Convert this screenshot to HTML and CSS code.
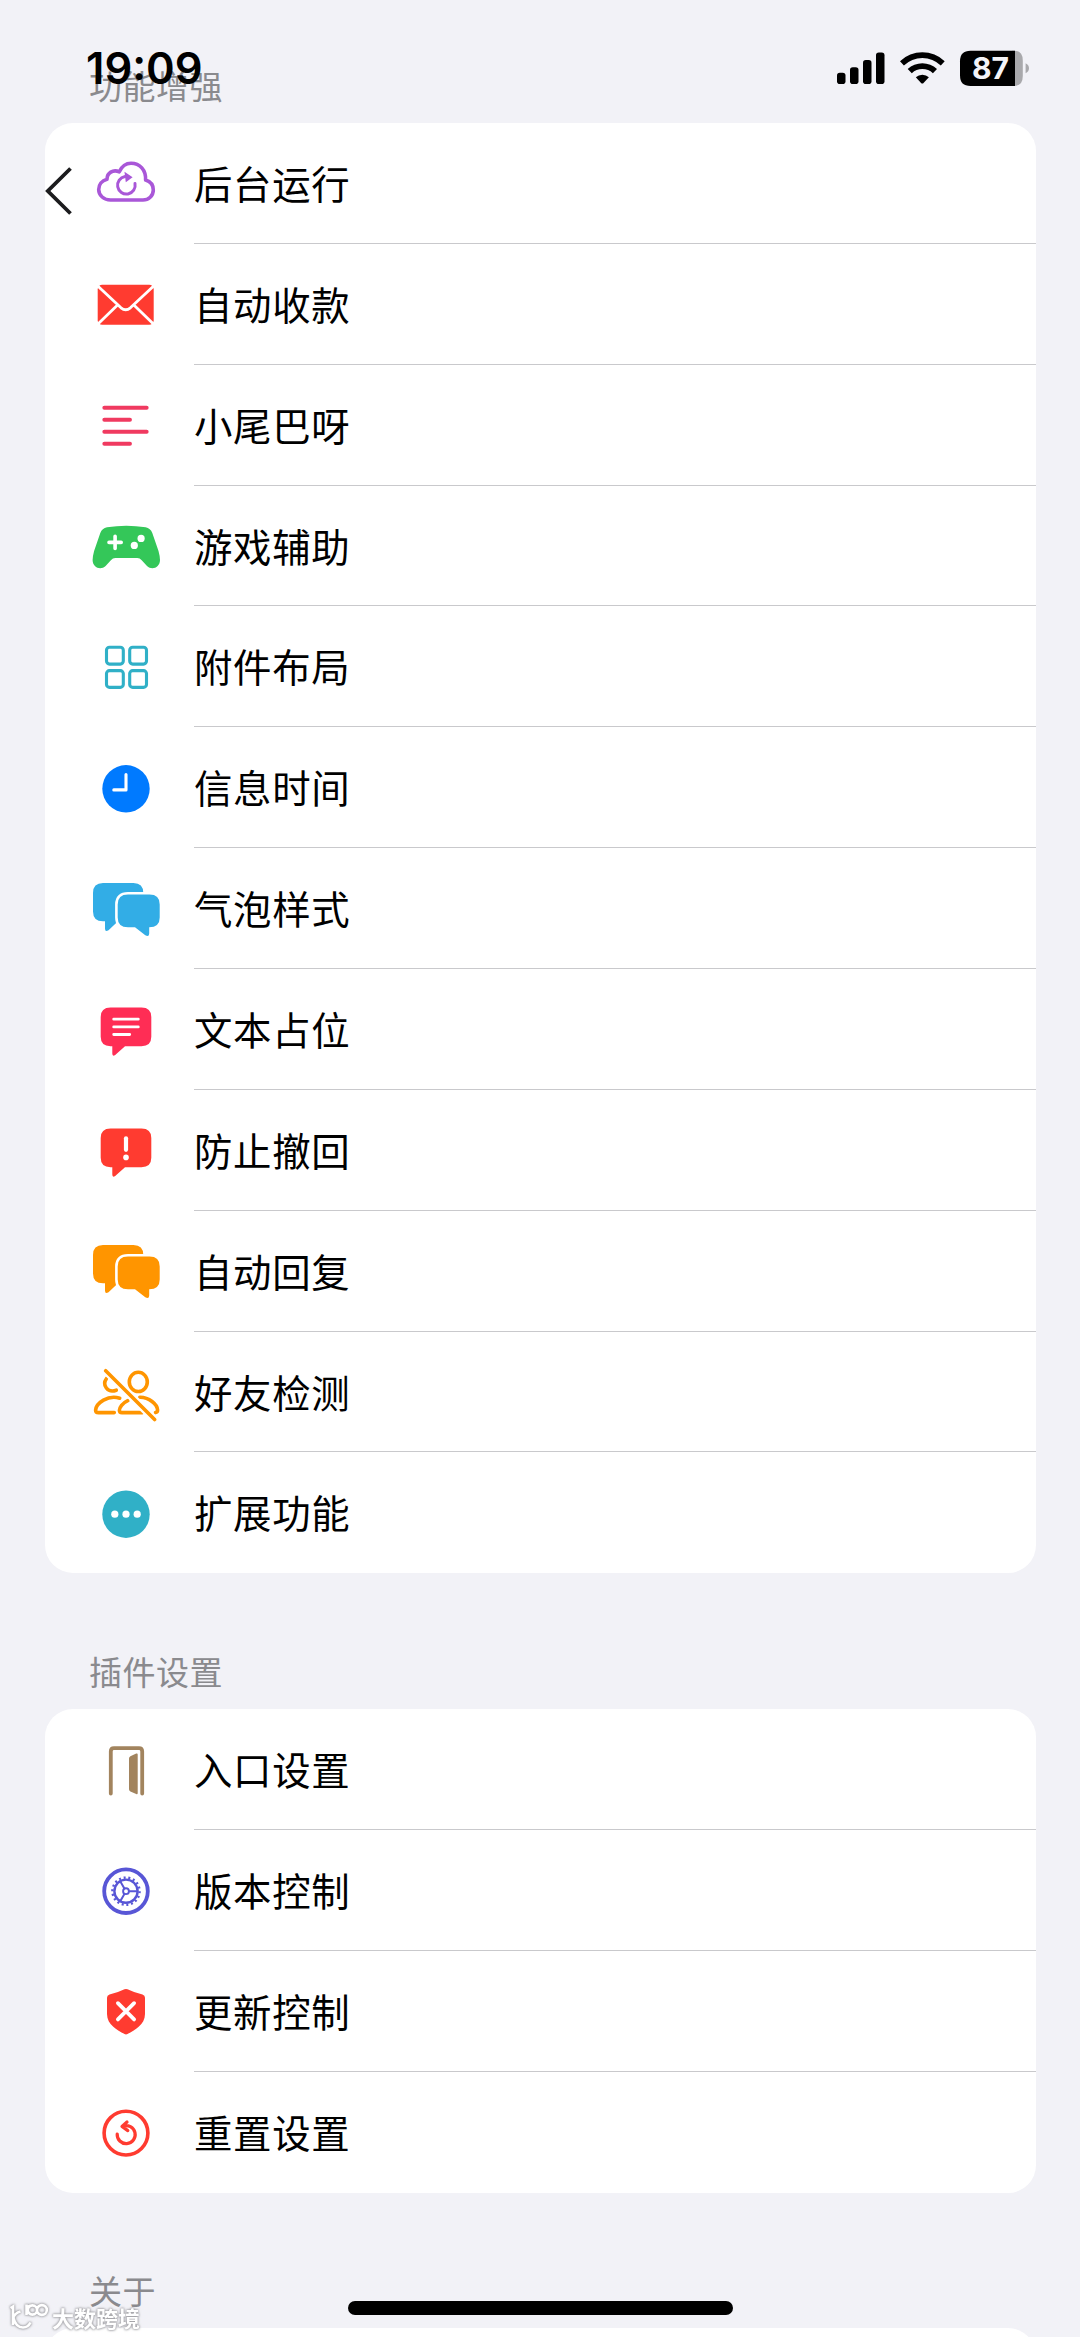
FILE: index.html
```html
<!DOCTYPE html>
<html lang="zh-CN">
<head>
<meta charset="utf-8">
<title>功能增强</title>
<link rel="stylesheet" href="styles.css">
</head>
<body>
<svg class="defs" aria-hidden="true">
  <symbol id="chats" viewBox="0 0 70 60">
    <path fill="currentColor" d="M12 4H42.5Q52.3 4 52.3 14V33Q52.3 42.3 42 42.3H27L17.5 51.3Q14 53.5 14 49.5V42.3H12Q2 42.3 2 32.5V14Q2 4 12 4Z"/>
    <path fill="#fff" stroke="#fff" stroke-width="5.2" d="M37 15.6H58.5Q68.7 15.6 68.7 25.5V38.5Q68.7 48.3 58.2 48.3V54.5Q58 58.5 54.3 56.3L44 48.3H37Q26.7 48.3 26.7 38.5V25.5Q26.7 15.6 37 15.6Z"/>
    <path fill="currentColor" d="M37 15.6H58.5Q68.7 15.6 68.7 25.5V38.5Q68.7 48.3 58.2 48.3V54.5Q58 58.5 54.3 56.3L44 48.3H37Q26.7 48.3 26.7 38.5V25.5Q26.7 15.6 37 15.6Z"/>
  </symbol>
  <symbol id="bubble" viewBox="0 0 70 60">
    <path fill="currentColor" d="M19.5 8.5H50.5Q60.3 8.5 60.3 18V37.8Q60.3 47.2 50.5 47.2H34L24.2 56Q21.3 57.8 21.3 54.5V47.2H19.5Q9.7 47.2 9.7 37.8V18Q9.7 8.5 19.5 8.5Z"/>
  </symbol>
</svg>

<header class="status">
  <span class="time">19:09</span>
  <svg class="signals" viewBox="0 0 200 44">
    <rect x="2" y="26.7" width="8.5" height="11.4" rx="2.8"/>
    <rect x="15" y="21.3" width="8.5" height="16.8" rx="2.8"/>
    <rect x="28" y="14" width="8.5" height="24.1" rx="2.8"/>
    <rect x="41" y="6.4" width="8.5" height="31.7" rx="2.8"/>
    <path d="M65 15.2A32.5 32.5 0 0 1 109.7 15.2L105.8 19.4A26.6 26.6 0 0 0 68.9 19.4Z"/>
    <path d="M72.7 23.1A21.4 21.4 0 0 1 102 23.1L97.9 27.3A15.4 15.4 0 0 0 76.8 27.3Z"/>
    <path d="M80.8 31.3A9.8 9.8 0 0 1 93.9 31.3L88.3 37.2Q87.3 38 86.3 37.2Z"/>
    <path fill="#a9a9ac" d="M179 4.7H177V40H179Q187.8 40 187.8 30V14.7Q187.8 4.7 179 4.7ZM190.6 17.3Q194 19 194 22.3T190.6 27.3Z"/>
    <path d="M180 4.7H135.5Q125 4.7 125 15.2V29.5Q125 40 135.5 40H180Z"/>
    <text class="charge" x="155.5" y="33.2" text-anchor="middle">87</text>
  </svg>
</header>
<svg class="back" viewBox="0 0 28 50"><path d="M25.5 2.5L2.8 25L25.5 47.5"/></svg>

<main class="page">
  <h2>功能增强</h2>
  <ul class="card">
    <li><svg class="icon purple line" viewBox="0 0 70 60"><path d="M19.5 47C13 47 7.7 42.5 7.7 36.5C7.7 32 10.7 27.6 16 26.3C16 20 22 16 28.3 18.8C31 13 35.5 10.3 40 10.3C49 10.3 55 17 54.6 27C59.5 28.5 62.3 32.5 62.3 37C62.3 43 57.5 47 52 47Z"/><path stroke-width="3" d="M44 30.5A8.8 8.8 0 1 1 34 23.6"/><path class="solid" d="M33.5 18.8L41.6 24.2L34.8 29.2Z"/></svg><span>后台运行</span></li>
    <li><svg class="icon red" viewBox="0 0 70 60"><rect x="6.7" y="10.7" width="56" height="40" rx="4.5" fill="currentColor"/><path class="cut" stroke-width="2.8" d="M7 12.2L30 33.8Q34.7 37.6 39.4 33.8L62.4 12.2M6.7 50.2L26.3 31.2M62.7 50.2L43.1 31.2"/></svg><span>自动收款</span></li>
    <li><svg class="icon pink line" viewBox="0 0 70 60"><path stroke-width="3.9" d="M13.3 12.8H55.7M13.3 24.8H39M13.3 36.8H55.7M13.3 48.8H39"/></svg><span>小尾巴呀</span></li>
    <li><svg class="icon green" viewBox="0 0 70 60"><path fill="currentColor" d="M16 11.3Q35.3 8.3 54.6 11.3Q59.5 12.2 61.3 17L67.5 35Q69 40.5 69 44C69 51.5 61 54.7 56 50L50.7 44.2Q48.8 42 46.3 42H24.3Q21.8 42 19.9 44.2L14.6 50C9.6 54.7 1.6 51.5 1.6 44Q1.6 40.5 3.1 35L9.3 17Q11.1 12.2 16 11.3Z"/><path class="cut" stroke-width="3.6" d="M18 26.4H30.2M24.1 20.2V32.5"/><g fill="#fff"><circle cx="50.1" cy="22.4" r="3.6"/><circle cx="43.3" cy="29.4" r="3.6"/></g></svg><span>游戏辅助</span></li>
    <li><svg class="icon teal line" viewBox="0 0 70 60"><g stroke-width="3.1"><rect x="15.5" y="10.3" width="16.8" height="16.8" rx="3"/><rect x="38.7" y="10.3" width="16.8" height="16.8" rx="3"/><rect x="15.5" y="33.6" width="16.8" height="16.8" rx="3"/><rect x="38.7" y="33.6" width="16.8" height="16.8" rx="3"/></g></svg><span>附件布局</span></li>
    <li><svg class="icon blue" viewBox="0 0 70 60"><circle cx="35" cy="30.8" r="23.7" fill="currentColor"/><path class="cut" stroke-width="3.1" d="M35 16.5V31.9H22.8"/></svg><span>信息时间</span></li>
    <li><svg class="icon cyan"><use href="#chats"/></svg><span>气泡样式</span></li>
    <li><svg class="icon rose" viewBox="0 0 70 60"><use href="#bubble"/><path class="cut" stroke-width="2.8" d="M22.7 20.2H47.3M22.7 27.9H47.3M22.7 35.5H38.7"/></svg><span>文本占位</span></li>
    <li><svg class="icon red" viewBox="0 0 70 60"><use href="#bubble"/><path class="cut" stroke-width="4.2" d="M35 18.3V29.8"/><circle cx="35" cy="37.4" r="2.8" fill="#fff"/></svg><span>防止撤回</span></li>
    <li><svg class="icon orange"><use href="#chats"/></svg><span>自动回复</span></li>
    <li><svg class="icon orange line" viewBox="0 0 70 60"><ellipse cx="47.3" cy="19.9" rx="9" ry="9.6"/><path d="M15.5 16.5C10.8 23 16.5 31.5 25.3 28.2M28.7 36.2C17 32.6 5.2 41 4.6 48.2Q4.6 50.6 7.5 50.6H23.3M36.8 38.6C31.3 41 28.5 45.8 28.4 48.2Q28.4 50.6 31 50.6H51.5M48.8 35.2C58 35 66.4 42.5 66.6 48Q66.6 50.2 64.5 50.6"/><path stroke="#fff" stroke-width="8" d="M14 8L64 58"/><path d="M14.7 8.7L63.6 57.6"/></svg><span>好友检测</span></li>
    <li><svg class="icon teal" viewBox="0 0 70 60"><circle cx="35" cy="31.2" r="23.7" fill="currentColor"/><g fill="#fff"><circle cx="23.8" cy="31.2" r="3.6"/><circle cx="35" cy="31.2" r="3.6"/><circle cx="46.2" cy="31.2" r="3.6"/></g></svg><span>扩展功能</span></li>
  </ul>

  <h2>插件设置</h2>
  <ul class="card">
    <li><svg class="icon brown line" viewBox="0 0 70 60"><path stroke-width="3.8" d="M19.8 53.6V11.5Q19.8 8.2 23 8.2H48Q51.2 8.2 51.2 11.5V53.6"/><path class="solid" d="M39.4 16.3L45.2 13.6Q46.7 13 46.7 14.6V53Q46.7 54.7 45.2 54L39.4 51.4Q38 50.7 38 49.2V18.5Q38 17 39.4 16.3Z"/></svg><span>入口设置</span></li>
    <li><svg class="icon indigo line" viewBox="0 0 70 60"><circle cx="35" cy="31.2" r="21.8" stroke-width="3.8"/><circle cx="35" cy="31.2" r="11.6" stroke-width="2.4"/><circle class="teeth" cx="35" cy="31.2" r="13.6" pathLength="72"/><circle cx="35" cy="31.2" r="2.9" stroke-width="1.9"/><path stroke-width="2" d="M38.2 31.2H46M33.4 28.4L29.5 21.7M33.4 34L29.5 40.7"/></svg><span>版本控制</span></li>
    <li><svg class="icon red" viewBox="0 0 70 60"><path fill="currentColor" d="M33.5 8.3Q35 7.5 36.5 8.3Q43 11.6 51.5 13.4Q54 14 54 16.8V33C54 44 43.5 49 36.5 53.1Q35 54 33.5 53.1C26.5 49 16 44 16 33V16.8Q16 14 18.5 13.4Q27 11.6 33.5 8.3Z"/><path class="cut" stroke-width="3.8" d="M26.9 22.2L43.1 38.4M43.1 22.2L26.9 38.4"/></svg><span>更新控制</span></li>
    <li><svg class="icon red line" viewBox="0 0 70 60"><circle cx="35" cy="31.1" r="21.9" stroke-width="3.6"/><path stroke-width="3.2" d="M26.2 32A9 9 0 1 0 32 24.2M36 20L31 24.4L36.8 28.6"/></svg><span>重置设置</span></li>
  </ul>

  <h2>关于</h2>
  <ul class="card"><li></li></ul>
</main>

<div class="home"></div>
<div class="watermark">
  <svg viewBox="0 0 42 30"><path d="M2.5 6L5 4.5V23M5 16Q7 11 12.500 9.500M5.500 16C7 22 10 25.500 15 25.500Q20 25.500 22.500 20.500M18.500 2.500V13M18.500 7Q20 3.500 24 3.500M29 8A4.600 4.600 0 1 1 19.800 8A4.600 4.600 0 1 1 29 8A4.900 4.900 0 1 1 38.800 8A4.900 4.900 0 1 1 29 8"/></svg>
  <span>大数跨境</span>
</div>
</body>
</html>
```
FILE: styles.css
```css
* {
  box-sizing: border-box;
}

html {
  height: 2337px;
  overflow: hidden;
}

body {
  margin: 0;
  height: 2337px;
  position: relative;
  overflow: hidden;
  background: #f2f2f7;
  color: #000;
  font-family: "Noto Sans CJK SC", sans-serif;
}

.defs {
  position: absolute;
  width: 0;
  height: 0;
}

.page {
  height: 2337px;
  overflow: hidden;
  padding: 63px 44.5px 0;
}

h2 {
  margin: 0;
  padding-left: 44.5px;
  height: 60px;
  font-size: 33px;
  font-weight: 400;
  line-height: 44px;
  letter-spacing: 0.5px;
  color: #8a8a8e;
}

.card {
  margin: 0 0 75.8px;
  padding: 0;
  list-style: none;
  background: #fff;
  border-radius: 28px;
}

.card li {
  position: relative;
  display: flex;
  align-items: center;
  gap: 33px;
  height: 120.87px;
  padding-left: 46.5px;
}

.card li + li::before {
  content: "";
  position: absolute;
  top: -1px;
  left: 149.5px;
  right: 0;
  height: 1px;
  background: #c9c9cc;
}

.card span {
  padding-bottom: 3px;
  font-size: 38.4px;
  line-height: 56px;
  letter-spacing: 0.7px;
}

.icon {
  flex: none;
  width: 70px;
  height: 60px;
}

.line {
  fill: none;
  stroke: currentColor;
  stroke-width: 3.6;
  stroke-linecap: round;
  stroke-linejoin: round;
}

.line .solid {
  fill: currentColor;
  stroke: none;
}

.cut {
  fill: none;
  stroke: #fff;
  stroke-linecap: round;
  stroke-linejoin: round;
}

.teeth {
  stroke-width: 2.4;
  stroke-linecap: butt;
  stroke-dasharray: 1.7 2.3;
}

.purple { color: #a957d8; }
.red { color: #ff3b30; }
.pink { color: #f03a60; }
.green { color: #34c759; }
.teal { color: #30b0c7; }
.blue { color: #007aff; }
.cyan { color: #32ade6; }
.rose { color: #ff2d55; }
.orange { color: #ff9500; }
.brown { color: #a2845e; }
.indigo { color: #5856d6; }

.status {
  position: absolute;
  z-index: 2;
  top: 46px;
  left: 86px;
  right: 45px;
  display: flex;
  justify-content: space-between;
}

.time {
  font: 600 43.5px/45px Inter, sans-serif;
  letter-spacing: 0;
}

.signals {
  width: 200px;
  height: 44px;
}

.charge {
  fill: #f4f4f8;
  font: 700 30px Inter, sans-serif;
}

.back {
  position: absolute;
  z-index: 2;
  top: 166px;
  left: 45px;
  width: 28px;
  height: 50px;
  fill: none;
  stroke: #1c1c1e;
  stroke-width: 3.8;
}

.home {
  position: absolute;
  top: 2301px;
  left: 348px;
  width: 385px;
  height: 14px;
  border-radius: 7px;
  background: #000;
}

.watermark {
  position: absolute;
  top: 2301px;
  left: 8px;
  display: flex;
  align-items: center;
  gap: 2px;
  filter: drop-shadow(0 0 1px #99999d) drop-shadow(0 0 1px #b4b4b8);
}

.watermark svg {
  width: 42px;
  height: 30px;
  fill: none;
  stroke: #fff;
  stroke-width: 2.6;
}

.watermark span {
  color: #fff;
  font-size: 22px;
  font-weight: 700;
  line-height: 32px;
}
```
